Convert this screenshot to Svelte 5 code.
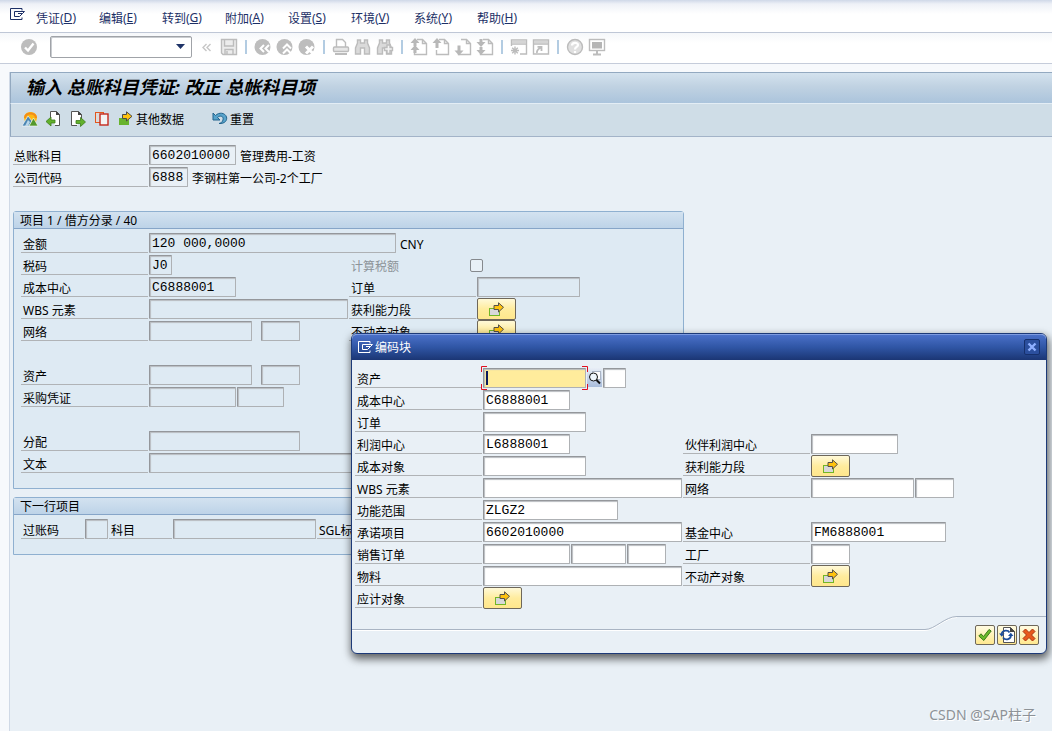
<script lang="ts">
  interface Field {
    chars: number;
    value?: string;
    spaced?: boolean;
    focused?: boolean;
  }

  interface Cell {
    label: string;
    fields?: Field[];
    text?: string;
    button?: boolean;
    checkbox?: boolean;
  }

  type Row = Cell[];

  const menus = [
    { title: '凭证', key: 'D' },
    { title: '编辑', key: 'E' },
    { title: '转到', key: 'G' },
    { title: '附加', key: 'A' },
    { title: '设置', key: 'S' },
    { title: '环境', key: 'V' },
    { title: '系统', key: 'Y' },
    { title: '帮助', key: 'H' },
  ];

  const toolGroups = [
    ['collapse', 'save'],
    ['back', 'exit', 'cancel'],
    ['print', 'find', 'findNext'],
    ['firstPage', 'prevPage', 'nextPage', 'lastPage'],
    ['session', 'shortcut'],
    ['help', 'monitor'],
  ];

  const headRows: Row[] = [
    [{ label: '总账科目', fields: [{ chars: 10, value: '6602010000' }], text: '管理费用-工资' }],
    [{ label: '公司代码', fields: [{ chars: 4, value: '6888' }], text: '李钢柱第一公司-2个工厂' }],
  ];

  const itemRows: Row[] = [
    [{ label: '金额', fields: [{ chars: 30, value: '120 000,0000' }], text: 'CNY' }],
    [{ label: '税码', fields: [{ chars: 2, value: 'J0' }] }, { label: '计算税额', checkbox: true }],
    [{ label: '成本中心', fields: [{ chars: 10, value: 'C6888001' }] }, { label: '订单', fields: [{ chars: 12 }] }],
    [{ label: 'WBS 元素', fields: [{ chars: 24 }] }, { label: '获利能力段', button: true }],
    [{ label: '网络', fields: [{ chars: 12 }, { chars: 4, spaced: true }] }, { label: '不动产对象', button: true }],
    [],
    [{ label: '资产', fields: [{ chars: 12 }, { chars: 4, spaced: true }] }],
    [{ label: '采购凭证', fields: [{ chars: 10 }, { chars: 5 }] }],
    [],
    [{ label: '分配', fields: [{ chars: 18 }] }],
    [{ label: '文本', fields: [{ chars: 50 }] }],
  ];

  const blockRows: Row[] = [
    [{ label: '资产', fields: [{ chars: 12, focused: true }, { chars: 2 }] }],
    [{ label: '成本中心', fields: [{ chars: 10, value: 'C6888001' }] }],
    [{ label: '订单', fields: [{ chars: 12 }] }],
    [{ label: '利润中心', fields: [{ chars: 10, value: 'L6888001' }] }, { label: '伙伴利润中心', fields: [{ chars: 10 }] }],
    [{ label: '成本对象', fields: [{ chars: 12 }] }, { label: '获利能力段', button: true }],
    [{ label: 'WBS 元素', fields: [{ chars: 24 }] }, { label: '网络', fields: [{ chars: 12 }, { chars: 4 }] }],
    [{ label: '功能范围', fields: [{ chars: 16, value: 'ZLGZ2' }] }],
    [{ label: '承诺项目', fields: [{ chars: 24, value: '6602010000' }] }, { label: '基金中心', fields: [{ chars: 16, value: 'FM6888001' }] }],
    [{ label: '销售订单', fields: [{ chars: 10 }, { chars: 6 }, { chars: 4 }] }, { label: '工厂', fields: [{ chars: 4 }] }],
    [{ label: '物料', fields: [{ chars: 24 }] }, { label: '不动产对象', button: true }],
    [{ label: '应计对象', button: true }],
  ];

  // one character is 8px, plus border and inner padding
  function fieldWidth(chars: number): number {
    return chars * 8 + 7;
  }
</script>

{#snippet doorIcon()}
  <svg class="door" width="16" height="13" viewBox="0 0 16 13" fill="none" stroke="currentColor">
    <path d="M12 2.5V.5H.5v11H12V9.5M4.500 3.500H14.500L12.500 5.500L9.500 8.500H4.500ZM8 5.500H12.500" />
  </svg>
{/snippet}

{#snippet arrowIcon()}
  <svg width="16" height="15" viewBox="0 0 16 15">
    <rect x=".5" y="6.500" width="10" height="7" fill="#d8d8d8" stroke="#72b626" />
    <path d="M5 3.500H9.500V.8L14.500 5.300L9.500 10V7.500H5Z" fill="#ffc20e" stroke="#55504a" />
  </svg>
{/snippet}

{#snippet toolIcon(name: string)}
  <svg width="18" height="18" viewBox="0 0 18 18" fill="none" stroke="#bcbcbc" stroke-width="1.400">
    {#if name === 'ok'}
      <circle cx="9" cy="9" r="8" fill="#bdbdbd" stroke="none" />
      <path d="M5 9.500L8 12.500L13.500 5.500" stroke="#fff" stroke-width="2.400" />
    {:else if name === 'collapse'}
      <path d="M8.500 6L5 9.500L8.500 13M12.500 6L9 9.500L12.500 13" stroke="#c6c6c6" />
    {:else if name === 'save'}
      <path d="M1.500 1.500H16.500V16.500H3L1.500 15Z" fill="#ececec" />
      <path d="M4.500 2V8H13.500V2M5 16.500V11.500H13V16.500M7 13V16" />
    {:else if name === 'back' || name === 'exit' || name === 'cancel'}
      <circle cx="8.500" cy="9" r="8" fill="#bdbdbd" stroke="none" />
      {#if name === 'back'}
        <path d="M10 7L6.500 10.500L10 14M15 7L11.500 10.500L15 14" stroke="#fff" stroke-width="2" />
      {:else if name === 'exit'}
        <path d="M7 10.500L11 6.500L15 10.500M7 15.500L11 11.500L15 15.500" stroke="#fff" stroke-width="2" />
      {:else}
        <path d="M8 8.500L15 15.500M15 8.500L8 15.500" stroke="#fff" stroke-width="3" />
      {/if}
    {:else if name === 'print'}
      <path d="M4.500 9V1.500H10.500L13.500 4.500V9" />
      <rect x="1.500" y="9" width="15" height="4.500" rx="1" fill="#e6e6e6" />
      <path d="M3 16H15" stroke-width="2" />
    {:else if name === 'find' || name === 'findNext'}
      <path d="M3.500 2H6.500V5H10.500V2H13.500V5L15.500 10V16H10.500V10H6.500V16H1.500V10L3.500 5Z" fill="#dadada" />
      {#if name === 'findNext'}
        <path d="M11 7H14V9.500H16.500V12.500H14V15.500H11V12.500H8.500V9.500H11Z" fill="#f4f4f4" />
      {/if}
    {:else if name === 'firstPage' || name === 'prevPage' || name === 'nextPage' || name === 'lastPage'}
      <path d="M7 1.500H12.500L16.500 5.500V16.500H4.500V12M12.500 2V5.500H16" />
      {#if name === 'firstPage'}
        <path d="M5 0L9.500 5H6.500V8H3.500V5H.5ZM5 7L9.500 12H6.500V15H3.500V12H.5Z" fill="#b8b8b8" stroke="none" />
      {:else if name === 'prevPage'}
        <path d="M5 0L9.500 5H6.500V10H3.500V5H.5Z" fill="#b8b8b8" stroke="none" />
      {:else if name === 'nextPage'}
        <path d="M5 17.500L9.500 12.500H6.500V7.500H3.500V12.500H.5Z" fill="#b8b8b8" stroke="none" />
      {:else}
        <path d="M5 17L9.500 12H6.500V9H3.500V12H.5ZM5 9L9.500 4H6.500V1H3.500V4H.5Z" fill="#b8b8b8" stroke="none" />
      {/if}
    {:else if name === 'session'}
      <path d="M1.500 8V2H16.500V16H10M1.500 6H16.500" />
      <path d="M2 4H16" stroke="#d5d5d5" stroke-width="3" />
      <path d="M5 8.500V16.500M1 12.500H9M2.200 9.700L7.800 15.300M7.800 9.700L2.200 15.300" />
    {:else if name === 'shortcut'}
      <path d="M1.500 2H16.500V16H1.500ZM1.500 6H16.500" />
      <path d="M2 4H16" stroke="#d5d5d5" stroke-width="2" />
      <path d="M5 15C4.500 12 6 11 8.500 9.800M5.500 8.800H9.500V13" stroke-width="1.800" />
    {:else if name === 'help'}
      <circle cx="9" cy="9" r="7.500" fill="#e0e0e0" />
      <path d="M6 7.500C6 4 12 4 12 7C12 9 9 9 9 11.500M9 13V15" stroke="#fff" stroke-width="2.200" />
    {:else}
      <rect x="1.500" y="1.500" width="15" height="11" />
      <rect x="4" y="4" width="10" height="6.500" fill="#b5b5b5" stroke="none" />
      <path d="M9 13V16M5 16.500H13" stroke-width="2" />
    {/if}
  </svg>
{/snippet}

{#snippet formRow(row: Row, prefix: string, readonly: boolean)}
  <div class="row">
    {#each row as cell, i}
      {@const id = `${prefix}-${i}`}
      <div class="cell">
        <label class="caption" class:muted={cell.checkbox} for={id}>{cell.label}</label>
        {#each cell.fields ?? [] as field, n}
          <span class="field" class:spaced={field.spaced} class:focused={field.focused}>
            <input
              id={n === 0 ? id : `${id}-${n}`}
              type="text"
              aria-label={n === 0 ? undefined : `${cell.label} ${n + 1}`}
              value={field.value ?? ''}
              {readonly}
              style:width="{fieldWidth(field.chars)}px"
            />
            {#if field.focused}
              <svg class="focus-mark" width="107" height="24" viewBox="0 0 107 24" fill="none" stroke="#e01020">
                <path d="M.5 6V.5H6M101 .5H106.500V6M.5 18V23.500H6M101 23.500H106.500V18" />
              </svg>
              <span class="caret"></span>
            {/if}
          </span>
          {#if field.focused}
            <button class="lookup" type="button" aria-label="搜索">
              <svg width="14" height="16" viewBox="0 0 14 16" fill="none">
                <rect x="4.500" y="1.500" width="8" height="8" fill="#fff" stroke="#aab4c4" />
                <circle cx="5.500" cy="7" r="4" fill="#eef6fc" stroke="#111" />
                <path d="M8.500 10L12 13.500" stroke="#111" stroke-width="2" />
              </svg>
            </button>
          {/if}
        {/each}
        {#if cell.button}
          <button {id} class="more" type="button" aria-label={cell.label}>{@render arrowIcon()}</button>
        {/if}
        {#if cell.checkbox}
          <input {id} type="checkbox" disabled />
        {/if}
        {#if cell.text}
          <span class="note">{cell.text}</span>
        {/if}
      </div>
    {/each}
  </div>
{/snippet}

<div class="sap">
  <nav class="menu-bar">
    {@render doorIcon()}
    {#each menus as menu}
      <button class="menu" type="button">{menu.title}(<u>{menu.key}</u>)</button>
    {/each}
  </nav>

  <div class="system-bar">
    <button class="tool" type="button" aria-label="确认">{@render toolIcon('ok')}</button>
    <select class="command" aria-label="命令">
      <option></option>
    </select>
    {#each toolGroups as group, g}
      {#if g > 0}
        <span class="divider"></span>
      {/if}
      {#each group as name}
        <button class="tool" type="button" aria-label={name}>{@render toolIcon(name)}</button>
      {/each}
    {/each}
  </div>

  <main class="screen">
    <h1>输入 总账科目凭证: 改正 总帐科目项</h1>

    <div class="app-bar">
      <button class="action" type="button" aria-label="抬头">
        <svg width="16" height="16" viewBox="0 0 16 16">
          <path d="M2 7C2 -1 15 -1 15 7L14 11H3Z" fill="#fdb913" />
          <path d="M3 7C3 1 14 1 14 7" fill="none" stroke="#f28c1b" stroke-width="2" />
          <path d="M0 15L6 5L10 10L7 15Z" fill="#4b86b3" stroke="#fff" stroke-width="0.600" />
          <path d="M7 15L11.500 7L16 15Z" fill="#55982c" stroke="#fff" stroke-width="0.600" />
          <path d="M3 15L6 9L8 11L6 15Z" fill="#b9d5e8" />
        </svg>
      </button>
      <button class="action" type="button" aria-label="上一项目">
        <svg width="16" height="16" viewBox="0 0 16 16">
          <path d="M4.500 7V.5H10.500L13.500 3.500V14.500H9" fill="#fff" stroke="#555" />
          <path d="M10 0L14 4H10Z" fill="#444" />
          <path d="M0 10.500L5 6V9H9V12H5V15Z" fill="#62b12c" stroke="#3d7c1a" stroke-width="0.800" />
        </svg>
      </button>
      <button class="action" type="button" aria-label="下一项目">
        <svg width="16" height="16" viewBox="0 0 16 16">
          <path d="M7 14.500H1.500V.5H8.500L11.500 3.500V8" fill="#fff" stroke="#555" />
          <path d="M8 0L12 4H8Z" fill="#444" />
          <path d="M15.500 11L10.500 6.500V9.500H6V12.500H10.500V15.500Z" fill="#62b12c" stroke="#3d7c1a" stroke-width="0.800" />
        </svg>
      </button>
      <button class="action" type="button" aria-label="更多数据">
        <svg width="16" height="16" viewBox="0 0 16 16">
          <rect x="1.500" y="1.500" width="8" height="10" fill="#dcdcdc" stroke="#e2571e" />
          <rect x="6" y="3" width="8" height="11" fill="#f4f4f4" stroke="#c5281c" stroke-width="1.400" />
        </svg>
      </button>
      <button class="action named" type="button">
        <svg width="16" height="16" viewBox="0 0 16 16">
          <rect x="1" y="7" width="10" height="7" fill="#68b32e" />
          <path d="M4.500 3.500H8.500V.8L14 5.300L8.500 10V7.500H4.500Z" fill="#ffc20e" stroke="#4a4a4a" />
        </svg>
        其他数据
      </button>
      <button class="action named reset" type="button">
        <svg width="16" height="16" viewBox="0 0 16 16">
          <path d="M1 2V9H8L5.500 6.500C8 4 12 5 11 9C10.500 11 9 12 7 12.500C13 13 15.500 9 14.500 6C13 1.500 7 1 3.500 4.500Z" fill="#58a4cc" stroke="#22638c" />
        </svg>
        重置
      </button>
    </div>

    <div class="content">
      {#each headRows as row, r}
        {@render formRow(row, `head-${r}`, true)}
      {/each}

      <section class="panel item">
        <h2>项目 1 / 借方分录 / 40</h2>
        <div class="rows">
          {#each itemRows as row, r}
            {@render formRow(row, `item-${r}`, true)}
          {/each}
        </div>
      </section>

      <section class="panel next">
        <h2>下一行项目</h2>
        <div class="rows next-row">
          <label class="caption" for="posting-key">过账码</label>
          <input id="posting-key" type="text" readonly style:width="{fieldWidth(2)}px" />
          <label class="caption" for="account">科目</label>
          <input id="account" type="text" readonly style:width="{fieldWidth(17)}px" />
          <label class="caption" for="sgl">SGL标</label>
          <input id="sgl" type="text" readonly style:width="{fieldWidth(1)}px" />
        </div>
      </section>
    </div>
  </main>

  <div class="dialog" role="dialog" aria-labelledby="dialog-title">
    <header>
      {@render doorIcon()}
      <span id="dialog-title">编码块</span>
      <button class="close" type="button" aria-label="关闭">
        <svg width="10" height="10" viewBox="0 0 10 10">
          <path d="M1.500 1.500L8.500 8.500M8.500 1.500L1.500 8.500" stroke="#8fb0ff" stroke-width="2.400" />
        </svg>
      </button>
    </header>
    <div class="dialog-rows">
      {#each blockRows as row, r}
        {@render formRow(row, `block-${r}`, false)}
      {/each}
    </div>
    <footer>
      <div class="rule"></div>
      <svg class="bend" width="32" height="20" viewBox="0 0 32 20" fill="none">
        <path d="M0 20.500C10 20.500 20 7.500 32 7.500" stroke="#fff" />
        <path d="M0 19.500C10 19.500 20 6.500 32 6.500" stroke="#a9b4c3" />
      </svg>
      <div class="buttons">
        <button type="button" aria-label="继续">
          <svg width="14" height="14" viewBox="0 0 14 14">
            <path d="M.8 8L3 5.800L5.500 8.500L11 1.500L13.200 3L5.800 12.500Z" fill="#6cba2b" stroke="#3c7a18" />
          </svg>
        </button>
        <button type="button" aria-label="刷新">
          <svg width="16" height="16" viewBox="0 0 16 16" fill="none">
            <path d="M4.500 15.500V.5H11.500L15.500 4.500V15.500Z" fill="#fff" stroke="#555" />
            <path d="M11 0L16 5H11Z" fill="#444" />
            <path d="M2.500 7C3.500 3 9 2.500 10.500 5.500M12 9C11 13 6 13.500 4 10.500" stroke="#1d4f9c" stroke-width="1.800" />
            <path d="M0 6.500H5.500L2.800 9.800ZM9 9H14.500L11.800 5.700Z" fill="#1d4f9c" />
          </svg>
        </button>
        <button type="button" aria-label="取消">
          <svg width="14" height="14" viewBox="0 0 14 14">
            <path d="M3.500 1L7 4.500L10.500 1L13 3.500L9.500 7L13 10.500L10.500 13L7 9.500L3.500 13L1 10.500L4.500 7L1 3.500Z" fill="#e8591c" stroke="#a83210" />
          </svg>
        </button>
      </div>
    </footer>
  </div>

  <span class="watermark">CSDN @SAP柱子</span>
</div>

<style>
  :global(body) {
    background: #f7f9fc;
  }

  .sap {
    position: relative;
    display: flex;
    flex-direction: column;
    min-height: 100vh;
    overflow: hidden;
    color: #000;
    font: 12px 'Noto Sans', 'Noto Sans CJK SC', sans-serif;
  }

  .sap *,
  .sap {
    box-sizing: border-box;
  }

  button,
  input,
  select {
    margin: 0;
    padding: 0;
    font: inherit;
    color: inherit;
  }

  button {
    display: flex;
    align-items: center;
    justify-content: center;
    border: 0;
    background: none;
  }

  svg {
    flex-shrink: 0;
  }

  .menu-bar {
    display: flex;
    align-items: center;
    height: 33px;
    padding: 3px 10px 0;
    border-bottom: 1px solid #bfc7d6;
    background: linear-gradient(#cfd8e8, #eef1f7 4px, #fff 14px);
    color: #1c2f66;
  }

  .menu-bar .door {
    margin: 0 10px 6px 0;
  }

  .menu {
    justify-content: flex-start;
    width: 63px;
    white-space: nowrap;
  }

  .system-bar {
    display: flex;
    align-items: center;
    height: 31px;
    padding: 0 18px 2px;
    border-bottom: 1px solid #c5ccda;
    background: linear-gradient(#f5f7fa, #fff 10px);
  }

  .tool {
    width: 22px;
    height: 22px;
  }

  .command {
    width: 142px;
    height: 22px;
    margin: 0 4px 0 10px;
    appearance: none;
    border: 1px solid #a0a3a8;
    border-radius: 2px;
    background: url("data:image/svg+xml,%3Csvg xmlns='http://www.w3.org/2000/svg' width='9' height='6'%3E%3Cpath d='M0 0H9L4.500 5Z' fill='%231f3468'/%3E%3C/svg%3E") no-repeat right 6px center #fff;
    box-shadow: inset 1px 1px #c9ccd0;
  }

  .divider {
    width: 2px;
    height: 14px;
    margin: 0 5px;
    background: #b3cce2;
  }

  .screen {
    flex: 1;
    margin: 8px 0 0 9px;
    border-left: 1px solid #d0d9e6;
    background: #e9f0f6;
  }

  h1 {
    height: 32px;
    margin: 0;
    padding-left: 15px;
    border-top: 1px solid #93a9c0;
    border-left: 1px solid #93a9c0;
    border-bottom: 1px solid #e3edf5;
    background: linear-gradient(#d4e2ee, #c0d2e2 45%, #abc4dc);
    font-size: 18px;
    font-style: italic;
    font-weight: 700;
    line-height: 28px;
    white-space: nowrap;
  }

  .app-bar {
    display: flex;
    align-items: center;
    height: 33px;
    padding: 0 11px 2px;
    border-bottom: 1px solid #a3b3c8;
    border-left: 1px solid #93a9c0;
    background: #cfdde7;
  }

  .action {
    width: 16px;
    height: 22px;
    margin-right: 8px;
    white-space: nowrap;
  }

  .action.named {
    width: auto;
    gap: 2px;
  }

  .action.reset {
    margin-left: 20px;
  }

  .content {
    padding: 8px 3px;
  }

  .row,
  .cell,
  .next-row {
    display: flex;
  }

  .row {
    height: 22px;
  }

  .cell {
    flex: none;
    width: 328px;
    gap: 1px;
  }

  .caption {
    flex: none;
    width: 127px;
    height: 20px;
    padding: 3px 0 0 2px;
    border-bottom: 1px solid #b0b3b6;
    line-height: 18px;
    white-space: nowrap;
  }

  .content > .row .caption {
    width: 135px;
    padding-left: 1px;
  }

  .caption.muted {
    width: 120px;
    border-color: transparent;
    color: #8d9499;
  }

  .field {
    position: relative;
    height: 20px;
  }

  .spaced {
    margin-left: 8px;
  }

  input[type='text'] {
    display: block;
    height: 20px;
    padding: 0 0 0 2px;
    border: 1px solid;
    border-color: #94979b #aeb1b4 #aeb1b4 #94979b;
    border-radius: 1px;
    outline: 0;
    background: #fff;
    box-shadow: inset 1px 1px 1px #b8bcc0;
    font-family: 'Liberation Mono', monospace;
    font-size: 13px;
  }

  input[readonly] {
    background: transparent;
  }

  .focused input[type='text'] {
    background: #ffec9c;
  }

  .focus-mark {
    position: absolute;
    top: -2px;
    left: -2px;
  }

  .caret {
    position: absolute;
    top: 3px;
    left: 3px;
    width: 2px;
    height: 14px;
    background: #0c1a5c;
  }

  .lookup {
    width: 15px;
    height: 19px;
    background: linear-gradient(#e8eef6, #a9bddc);
  }

  .more {
    width: 39px;
    height: 22px;
    margin-top: -1px;
    border: 1px solid #6e675a;
    border-radius: 2px;
    background: linear-gradient(#fff9d8, #ffec9e 50%, #ffe78c);
  }

  input[type='checkbox'] {
    width: 13px;
    height: 13px;
    margin-top: 4px;
    appearance: none;
    border: 1px solid #85898d;
    border-radius: 2px;
    background: #e8f0f6;
  }

  .note {
    padding: 3px 0 0 3px;
    line-height: 18px;
    white-space: nowrap;
  }

  .panel {
    width: 671px;
    border: 1px solid #8fb0d0;
    border-radius: 3px 3px 0 0;
    background: #deeaf3;
  }

  .item {
    margin-top: 22px;
    padding-bottom: 13px;
  }

  .next {
    margin-top: 8px;
    padding-bottom: 13px;
  }

  h2 {
    height: 17px;
    margin: 0;
    padding-left: 6px;
    border-bottom: 1px solid #86a5c8;
    background: linear-gradient(#d3e2f0, #bdd3e8);
    font-size: 12px;
    font-weight: 400;
    line-height: 17px;
  }

  .rows {
    padding: 4px 0 0 7px;
  }

  .next-row {
    height: 26px;
    gap: 1px;
  }

  .next-row .caption {
    width: 63px;
  }

  .dialog {
    position: absolute;
    top: 333px;
    left: 351px;
    width: 696px;
    border: 1px solid #1d3a78;
    border-radius: 6px;
    background: #e9f0f6;
    box-shadow: 1px 4px 8px 1px rgba(0, 0, 0, 0.6);
  }

  header {
    display: flex;
    align-items: center;
    gap: 1px;
    height: 26px;
    padding: 0 6px 1px;
    border-top: 1px solid #7d9be0;
    border-radius: 5px 5px 0 0;
    background: linear-gradient(#4a70c8, #2f55a4 50%, #1b3674);
    color: #fff;
  }

  .close {
    width: 16px;
    height: 16px;
    margin-left: auto;
    border: 1px solid #16306c;
    border-radius: 2px;
    background: #2b4f9e;
  }

  .dialog-rows {
    padding: 8px 3px 0;
  }

  footer {
    display: flex;
    height: 43px;
  }

  .rule {
    flex: 1;
    height: 21px;
    border-bottom: 1px solid #fff;
    box-shadow: inset 0 -1px #a9b4c3;
  }

  .bend {
    overflow: visible;
  }

  .buttons {
    display: flex;
    gap: 2px;
    margin-top: 6px;
    padding: 8px 7px 0 18px;
    border-top: 1px solid #a9b4c3;
  }

  .buttons button {
    width: 20px;
    height: 20px;
    border: 1px solid #6e675a;
    border-radius: 2px;
    background: linear-gradient(#fffbe2, #ffe88f);
  }

  .watermark {
    position: absolute;
    right: 16px;
    bottom: 6px;
    color: #8d9297;
    font-size: 14px;
    line-height: 20px;
    text-shadow: 1px 1px #fff;
  }
</style>
